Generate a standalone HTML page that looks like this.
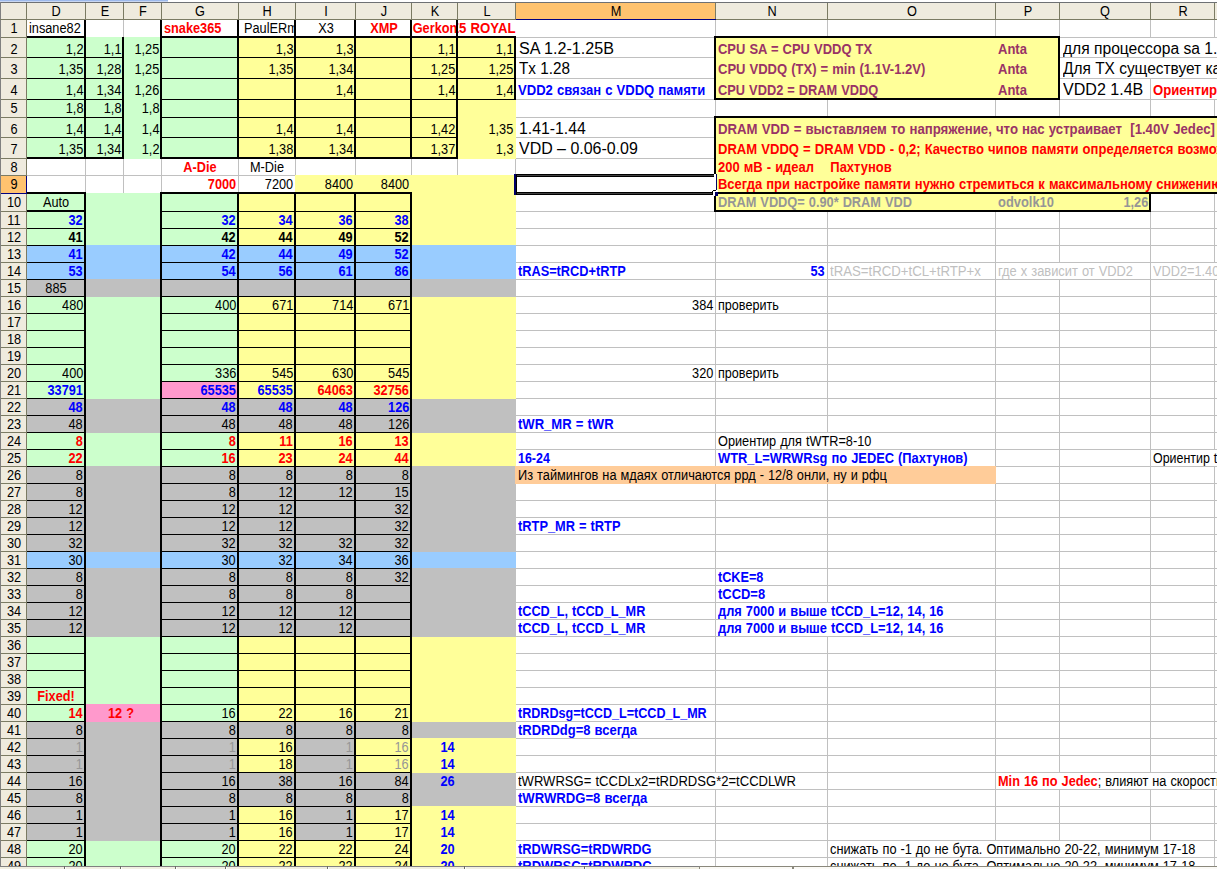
<!DOCTYPE html>
<html><head><meta charset="utf-8"><title>sheet</title>
<style>
html,body{margin:0;padding:0;background:#fff}
#w{position:relative;width:1217px;height:869px;overflow:hidden;background:#fff;font-family:"Liberation Sans",sans-serif;font-size:14px;color:#000}
#w i{position:absolute;display:block}
#w div{position:absolute;overflow:hidden}
#w p{position:absolute;display:block;white-space:pre;margin:0;line-height:16px;word-spacing:0.5px;transform:scaleX(0.91);transform-origin:0 0}
#w p.r{transform-origin:100% 0}
#w p.c{transform-origin:50% 0;width:300px;text-align:center}
#w p.b{font-weight:bold}
#w p.g{font-size:16px;line-height:19px;word-spacing:0;transform:scaleX(0.98)}
</style></head><body><div id="w">
<i style="left:85px;top:20px;width:1px;height:849px;background:#C0C0C0"></i>
<i style="left:123px;top:20px;width:1px;height:849px;background:#C0C0C0"></i>
<i style="left:161px;top:20px;width:1px;height:849px;background:#C0C0C0"></i>
<i style="left:238px;top:20px;width:1px;height:849px;background:#C0C0C0"></i>
<i style="left:295px;top:20px;width:1px;height:849px;background:#C0C0C0"></i>
<i style="left:355px;top:20px;width:1px;height:849px;background:#C0C0C0"></i>
<i style="left:411px;top:20px;width:1px;height:849px;background:#C0C0C0"></i>
<i style="left:457px;top:20px;width:1px;height:849px;background:#C0C0C0"></i>
<i style="left:515px;top:20px;width:1px;height:849px;background:#C0C0C0"></i>
<i style="left:715px;top:20px;width:1px;height:849px;background:#C0C0C0"></i>
<i style="left:827px;top:20px;width:1px;height:849px;background:#C0C0C0"></i>
<i style="left:995px;top:20px;width:1px;height:849px;background:#C0C0C0"></i>
<i style="left:1059px;top:20px;width:1px;height:849px;background:#C0C0C0"></i>
<i style="left:1150px;top:20px;width:1px;height:849px;background:#C0C0C0"></i>
<i style="left:1214px;top:20px;width:1px;height:849px;background:#C0C0C0"></i>
<i style="left:27px;top:37px;width:1190px;height:1px;background:#C0C0C0"></i>
<i style="left:27px;top:57px;width:1190px;height:1px;background:#C0C0C0"></i>
<i style="left:27px;top:78px;width:1190px;height:1px;background:#C0C0C0"></i>
<i style="left:27px;top:99px;width:1190px;height:1px;background:#C0C0C0"></i>
<i style="left:27px;top:117px;width:1190px;height:1px;background:#C0C0C0"></i>
<i style="left:27px;top:137px;width:1190px;height:1px;background:#C0C0C0"></i>
<i style="left:27px;top:158px;width:1190px;height:1px;background:#C0C0C0"></i>
<i style="left:27px;top:175px;width:1190px;height:1px;background:#C0C0C0"></i>
<i style="left:27px;top:193px;width:1190px;height:1px;background:#C0C0C0"></i>
<i style="left:27px;top:211px;width:1190px;height:1px;background:#C0C0C0"></i>
<i style="left:27px;top:228px;width:1190px;height:1px;background:#C0C0C0"></i>
<i style="left:27px;top:245px;width:1190px;height:1px;background:#C0C0C0"></i>
<i style="left:27px;top:262px;width:1190px;height:1px;background:#C0C0C0"></i>
<i style="left:27px;top:279px;width:1190px;height:1px;background:#C0C0C0"></i>
<i style="left:27px;top:296px;width:1190px;height:1px;background:#C0C0C0"></i>
<i style="left:27px;top:313px;width:1190px;height:1px;background:#C0C0C0"></i>
<i style="left:27px;top:330px;width:1190px;height:1px;background:#C0C0C0"></i>
<i style="left:27px;top:347px;width:1190px;height:1px;background:#C0C0C0"></i>
<i style="left:27px;top:364px;width:1190px;height:1px;background:#C0C0C0"></i>
<i style="left:27px;top:381px;width:1190px;height:1px;background:#C0C0C0"></i>
<i style="left:27px;top:398px;width:1190px;height:1px;background:#C0C0C0"></i>
<i style="left:27px;top:415px;width:1190px;height:1px;background:#C0C0C0"></i>
<i style="left:27px;top:432px;width:1190px;height:1px;background:#C0C0C0"></i>
<i style="left:27px;top:449px;width:1190px;height:1px;background:#C0C0C0"></i>
<i style="left:27px;top:466px;width:1190px;height:1px;background:#C0C0C0"></i>
<i style="left:27px;top:483px;width:1190px;height:1px;background:#C0C0C0"></i>
<i style="left:27px;top:500px;width:1190px;height:1px;background:#C0C0C0"></i>
<i style="left:27px;top:517px;width:1190px;height:1px;background:#C0C0C0"></i>
<i style="left:27px;top:534px;width:1190px;height:1px;background:#C0C0C0"></i>
<i style="left:27px;top:551px;width:1190px;height:1px;background:#C0C0C0"></i>
<i style="left:27px;top:568px;width:1190px;height:1px;background:#C0C0C0"></i>
<i style="left:27px;top:585px;width:1190px;height:1px;background:#C0C0C0"></i>
<i style="left:27px;top:602px;width:1190px;height:1px;background:#C0C0C0"></i>
<i style="left:27px;top:619px;width:1190px;height:1px;background:#C0C0C0"></i>
<i style="left:27px;top:636px;width:1190px;height:1px;background:#C0C0C0"></i>
<i style="left:27px;top:653px;width:1190px;height:1px;background:#C0C0C0"></i>
<i style="left:27px;top:670px;width:1190px;height:1px;background:#C0C0C0"></i>
<i style="left:27px;top:687px;width:1190px;height:1px;background:#C0C0C0"></i>
<i style="left:27px;top:704px;width:1190px;height:1px;background:#C0C0C0"></i>
<i style="left:27px;top:721px;width:1190px;height:1px;background:#C0C0C0"></i>
<i style="left:27px;top:738px;width:1190px;height:1px;background:#C0C0C0"></i>
<i style="left:27px;top:755px;width:1190px;height:1px;background:#C0C0C0"></i>
<i style="left:27px;top:772px;width:1190px;height:1px;background:#C0C0C0"></i>
<i style="left:27px;top:789px;width:1190px;height:1px;background:#C0C0C0"></i>
<i style="left:27px;top:806px;width:1190px;height:1px;background:#C0C0C0"></i>
<i style="left:27px;top:823px;width:1190px;height:1px;background:#C0C0C0"></i>
<i style="left:27px;top:840px;width:1190px;height:1px;background:#C0C0C0"></i>
<i style="left:27px;top:857px;width:1190px;height:1px;background:#C0C0C0"></i>
<i style="left:26px;top:37px;width:213px;height:21px;background:#CCFFCC"></i>
<i style="left:238px;top:37px;width:278px;height:21px;background:#FFFF99"></i>
<i style="left:26px;top:57px;width:213px;height:22px;background:#CCFFCC"></i>
<i style="left:238px;top:57px;width:278px;height:22px;background:#FFFF99"></i>
<i style="left:26px;top:78px;width:213px;height:22px;background:#CCFFCC"></i>
<i style="left:238px;top:78px;width:278px;height:22px;background:#FFFF99"></i>
<i style="left:26px;top:99px;width:213px;height:19px;background:#CCFFCC"></i>
<i style="left:238px;top:99px;width:278px;height:19px;background:#FFFF99"></i>
<i style="left:26px;top:117px;width:213px;height:21px;background:#CCFFCC"></i>
<i style="left:238px;top:117px;width:278px;height:21px;background:#FFFF99"></i>
<i style="left:26px;top:137px;width:213px;height:22px;background:#CCFFCC"></i>
<i style="left:238px;top:137px;width:278px;height:22px;background:#FFFF99"></i>
<i style="left:295px;top:175px;width:221px;height:19px;background:#FFFF99"></i>
<i style="left:26px;top:193px;width:213px;height:19px;background:#CCFFCC"></i>
<i style="left:238px;top:193px;width:278px;height:19px;background:#FFFF99"></i>
<i style="left:26px;top:211px;width:213px;height:18px;background:#CCFFCC"></i>
<i style="left:238px;top:211px;width:278px;height:18px;background:#FFFF99"></i>
<i style="left:26px;top:228px;width:213px;height:18px;background:#CCFFCC"></i>
<i style="left:238px;top:228px;width:278px;height:18px;background:#FFFF99"></i>
<i style="left:26px;top:296px;width:213px;height:18px;background:#CCFFCC"></i>
<i style="left:238px;top:296px;width:278px;height:18px;background:#FFFF99"></i>
<i style="left:26px;top:313px;width:213px;height:18px;background:#CCFFCC"></i>
<i style="left:238px;top:313px;width:278px;height:18px;background:#FFFF99"></i>
<i style="left:26px;top:330px;width:213px;height:18px;background:#CCFFCC"></i>
<i style="left:238px;top:330px;width:278px;height:18px;background:#FFFF99"></i>
<i style="left:26px;top:347px;width:213px;height:18px;background:#CCFFCC"></i>
<i style="left:238px;top:347px;width:278px;height:18px;background:#FFFF99"></i>
<i style="left:26px;top:364px;width:213px;height:18px;background:#CCFFCC"></i>
<i style="left:238px;top:364px;width:278px;height:18px;background:#FFFF99"></i>
<i style="left:26px;top:432px;width:213px;height:18px;background:#CCFFCC"></i>
<i style="left:238px;top:432px;width:278px;height:18px;background:#FFFF99"></i>
<i style="left:26px;top:449px;width:213px;height:18px;background:#CCFFCC"></i>
<i style="left:238px;top:449px;width:278px;height:18px;background:#FFFF99"></i>
<i style="left:26px;top:636px;width:213px;height:18px;background:#CCFFCC"></i>
<i style="left:238px;top:636px;width:278px;height:18px;background:#FFFF99"></i>
<i style="left:26px;top:653px;width:213px;height:18px;background:#CCFFCC"></i>
<i style="left:238px;top:653px;width:278px;height:18px;background:#FFFF99"></i>
<i style="left:26px;top:670px;width:213px;height:18px;background:#CCFFCC"></i>
<i style="left:238px;top:670px;width:278px;height:18px;background:#FFFF99"></i>
<i style="left:26px;top:687px;width:213px;height:18px;background:#CCFFCC"></i>
<i style="left:238px;top:687px;width:278px;height:18px;background:#FFFF99"></i>
<i style="left:26px;top:840px;width:213px;height:18px;background:#CCFFCC"></i>
<i style="left:238px;top:840px;width:278px;height:18px;background:#FFFF99"></i>
<i style="left:26px;top:857px;width:213px;height:18px;background:#CCFFCC"></i>
<i style="left:238px;top:857px;width:278px;height:18px;background:#FFFF99"></i>
<i style="left:26px;top:245px;width:490px;height:18px;background:#99CCFF"></i>
<i style="left:26px;top:262px;width:490px;height:18px;background:#99CCFF"></i>
<i style="left:26px;top:551px;width:490px;height:18px;background:#99CCFF"></i>
<i style="left:26px;top:279px;width:490px;height:18px;background:#C0C0C0"></i>
<i style="left:26px;top:398px;width:490px;height:18px;background:#C0C0C0"></i>
<i style="left:26px;top:415px;width:490px;height:18px;background:#C0C0C0"></i>
<i style="left:26px;top:466px;width:490px;height:18px;background:#C0C0C0"></i>
<i style="left:26px;top:483px;width:490px;height:18px;background:#C0C0C0"></i>
<i style="left:26px;top:500px;width:490px;height:18px;background:#C0C0C0"></i>
<i style="left:26px;top:517px;width:490px;height:18px;background:#C0C0C0"></i>
<i style="left:26px;top:534px;width:490px;height:18px;background:#C0C0C0"></i>
<i style="left:26px;top:568px;width:490px;height:18px;background:#C0C0C0"></i>
<i style="left:26px;top:585px;width:490px;height:18px;background:#C0C0C0"></i>
<i style="left:26px;top:602px;width:490px;height:18px;background:#C0C0C0"></i>
<i style="left:26px;top:619px;width:490px;height:18px;background:#C0C0C0"></i>
<i style="left:26px;top:721px;width:490px;height:18px;background:#C0C0C0"></i>
<i style="left:26px;top:772px;width:490px;height:18px;background:#C0C0C0"></i>
<i style="left:26px;top:789px;width:490px;height:18px;background:#C0C0C0"></i>
<i style="left:26px;top:381px;width:136px;height:18px;background:#CCFFCC"></i>
<i style="left:161px;top:381px;width:78px;height:18px;background:#FF99CC"></i>
<i style="left:238px;top:381px;width:278px;height:18px;background:#FFFF99"></i>
<i style="left:26px;top:704px;width:60px;height:18px;background:#CCFFCC"></i>
<i style="left:85px;top:704px;width:77px;height:18px;background:#FF99CC"></i>
<i style="left:161px;top:704px;width:78px;height:18px;background:#CCFFCC"></i>
<i style="left:238px;top:704px;width:278px;height:18px;background:#FFFF99"></i>
<i style="left:26px;top:738px;width:213px;height:18px;background:#C0C0C0"></i>
<i style="left:238px;top:738px;width:58px;height:18px;background:#FFFF99"></i>
<i style="left:295px;top:738px;width:61px;height:18px;background:#C0C0C0"></i>
<i style="left:355px;top:738px;width:161px;height:18px;background:#FFFF99"></i>
<i style="left:26px;top:755px;width:213px;height:18px;background:#C0C0C0"></i>
<i style="left:238px;top:755px;width:58px;height:18px;background:#FFFF99"></i>
<i style="left:295px;top:755px;width:61px;height:18px;background:#C0C0C0"></i>
<i style="left:355px;top:755px;width:161px;height:18px;background:#FFFF99"></i>
<i style="left:26px;top:806px;width:213px;height:18px;background:#C0C0C0"></i>
<i style="left:238px;top:806px;width:58px;height:18px;background:#FFFF99"></i>
<i style="left:295px;top:806px;width:61px;height:18px;background:#C0C0C0"></i>
<i style="left:355px;top:806px;width:161px;height:18px;background:#FFFF99"></i>
<i style="left:26px;top:823px;width:213px;height:18px;background:#C0C0C0"></i>
<i style="left:238px;top:823px;width:58px;height:18px;background:#FFFF99"></i>
<i style="left:295px;top:823px;width:61px;height:18px;background:#C0C0C0"></i>
<i style="left:355px;top:823px;width:161px;height:18px;background:#FFFF99"></i>
<i style="left:715px;top:37px;width:345px;height:63px;background:#FFFF99"></i>
<i style="left:715px;top:117px;width:586px;height:77px;background:#FFFF99"></i>
<i style="left:715px;top:193px;width:436px;height:19px;background:#FFFF99"></i>
<i style="left:515px;top:466px;width:481px;height:18px;background:#FFCC99"></i>
<i style="left:515px;top:20px;width:1px;height:17px;background:#fff"></i>
<i style="left:1150px;top:38px;width:1px;height:19px;background:#fff"></i>
<i style="left:1150px;top:58px;width:1px;height:20px;background:#fff"></i>
<i style="left:1214px;top:38px;width:1px;height:19px;background:#fff"></i>
<i style="left:1214px;top:58px;width:1px;height:20px;background:#fff"></i>
<i style="left:1214px;top:79px;width:1px;height:20px;background:#fff"></i>
<i style="left:715px;top:773px;width:1px;height:16px;background:#fff"></i>
<i style="left:1059px;top:773px;width:1px;height:16px;background:#fff"></i>
<i style="left:1150px;top:773px;width:1px;height:16px;background:#fff"></i>
<i style="left:1214px;top:773px;width:1px;height:16px;background:#fff"></i>
<i style="left:995px;top:841px;width:1px;height:16px;background:#fff"></i>
<i style="left:1059px;top:841px;width:1px;height:16px;background:#fff"></i>
<i style="left:1150px;top:841px;width:1px;height:16px;background:#fff"></i>
<i style="left:995px;top:858px;width:1px;height:16px;background:#fff"></i>
<i style="left:1059px;top:858px;width:1px;height:16px;background:#fff"></i>
<i style="left:1150px;top:858px;width:1px;height:16px;background:#fff"></i>
<i style="left:827px;top:450px;width:1px;height:16px;background:#fff"></i>
<i style="left:827px;top:433px;width:1px;height:16px;background:#fff"></i>
<i style="left:827px;top:603px;width:1px;height:16px;background:#fff"></i>
<i style="left:827px;top:620px;width:1px;height:16px;background:#fff"></i>
<i style="left:1214px;top:450px;width:1px;height:16px;background:#fff"></i>
<i style="left:1214px;top:263px;width:1px;height:16px;background:#fff"></i>
<i style="left:1059px;top:263px;width:1px;height:16px;background:#fff"></i>
<i style="left:27px;top:36px;width:59px;height:2px;background:#000"></i>
<i style="left:84px;top:20px;width:2px;height:139px;background:#000"></i>
<i style="left:122px;top:37px;width:2px;height:122px;background:#000"></i>
<i style="left:27px;top:157px;width:97px;height:2px;background:#000"></i>
<i style="left:27px;top:57px;width:97px;height:1px;background:#000"></i>
<i style="left:27px;top:78px;width:97px;height:1px;background:#000"></i>
<i style="left:27px;top:99px;width:97px;height:1px;background:#000"></i>
<i style="left:27px;top:117px;width:97px;height:1px;background:#000"></i>
<i style="left:27px;top:137px;width:97px;height:1px;background:#000"></i>
<i style="left:160px;top:36px;width:356px;height:2px;background:#000"></i>
<i style="left:160px;top:20px;width:2px;height:139px;background:#000"></i>
<i style="left:237px;top:20px;width:2px;height:139px;background:#000"></i>
<i style="left:294px;top:20px;width:2px;height:139px;background:#000"></i>
<i style="left:354px;top:20px;width:2px;height:139px;background:#000"></i>
<i style="left:410px;top:20px;width:2px;height:139px;background:#000"></i>
<i style="left:456px;top:20px;width:2px;height:139px;background:#000"></i>
<i style="left:514px;top:36px;width:2px;height:64px;background:#000"></i>
<i style="left:160px;top:157px;width:298px;height:2px;background:#000"></i>
<i style="left:162px;top:57px;width:296px;height:1px;background:#000"></i>
<i style="left:162px;top:78px;width:296px;height:1px;background:#000"></i>
<i style="left:162px;top:99px;width:296px;height:1px;background:#000"></i>
<i style="left:162px;top:117px;width:296px;height:1px;background:#000"></i>
<i style="left:162px;top:137px;width:296px;height:1px;background:#000"></i>
<i style="left:458px;top:57px;width:58px;height:1px;background:#000"></i>
<i style="left:458px;top:78px;width:58px;height:1px;background:#000"></i>
<i style="left:458px;top:99px;width:58px;height:1px;background:#000"></i>
<i style="left:27px;top:192px;width:59px;height:2px;background:#000"></i>
<i style="left:84px;top:192px;width:2px;height:678px;background:#000"></i>
<i style="left:27px;top:210px;width:59px;height:2px;background:#000"></i>
<i style="left:27px;top:228px;width:59px;height:1px;background:#000"></i>
<i style="left:27px;top:245px;width:59px;height:1px;background:#000"></i>
<i style="left:27px;top:262px;width:59px;height:1px;background:#000"></i>
<i style="left:27px;top:279px;width:59px;height:1px;background:#000"></i>
<i style="left:27px;top:296px;width:59px;height:1px;background:#000"></i>
<i style="left:27px;top:313px;width:59px;height:1px;background:#000"></i>
<i style="left:27px;top:330px;width:59px;height:1px;background:#000"></i>
<i style="left:27px;top:347px;width:59px;height:1px;background:#000"></i>
<i style="left:27px;top:364px;width:59px;height:1px;background:#000"></i>
<i style="left:27px;top:381px;width:59px;height:1px;background:#000"></i>
<i style="left:27px;top:398px;width:59px;height:1px;background:#000"></i>
<i style="left:27px;top:415px;width:59px;height:1px;background:#000"></i>
<i style="left:27px;top:432px;width:59px;height:1px;background:#000"></i>
<i style="left:27px;top:449px;width:59px;height:1px;background:#000"></i>
<i style="left:27px;top:466px;width:59px;height:1px;background:#000"></i>
<i style="left:27px;top:483px;width:59px;height:1px;background:#000"></i>
<i style="left:27px;top:500px;width:59px;height:1px;background:#000"></i>
<i style="left:27px;top:517px;width:59px;height:1px;background:#000"></i>
<i style="left:27px;top:534px;width:59px;height:1px;background:#000"></i>
<i style="left:27px;top:551px;width:59px;height:1px;background:#000"></i>
<i style="left:27px;top:568px;width:59px;height:1px;background:#000"></i>
<i style="left:27px;top:585px;width:59px;height:1px;background:#000"></i>
<i style="left:27px;top:602px;width:59px;height:1px;background:#000"></i>
<i style="left:27px;top:619px;width:59px;height:1px;background:#000"></i>
<i style="left:27px;top:636px;width:59px;height:1px;background:#000"></i>
<i style="left:27px;top:653px;width:59px;height:1px;background:#000"></i>
<i style="left:27px;top:670px;width:59px;height:1px;background:#000"></i>
<i style="left:27px;top:687px;width:59px;height:1px;background:#000"></i>
<i style="left:27px;top:704px;width:59px;height:1px;background:#000"></i>
<i style="left:27px;top:721px;width:59px;height:1px;background:#000"></i>
<i style="left:27px;top:738px;width:59px;height:1px;background:#000"></i>
<i style="left:27px;top:755px;width:59px;height:1px;background:#000"></i>
<i style="left:27px;top:772px;width:59px;height:1px;background:#000"></i>
<i style="left:27px;top:789px;width:59px;height:1px;background:#000"></i>
<i style="left:27px;top:806px;width:59px;height:1px;background:#000"></i>
<i style="left:27px;top:823px;width:59px;height:1px;background:#000"></i>
<i style="left:27px;top:840px;width:59px;height:1px;background:#000"></i>
<i style="left:27px;top:857px;width:59px;height:1px;background:#000"></i>
<i style="left:27px;top:874px;width:59px;height:1px;background:#000"></i>
<i style="left:160px;top:192px;width:252px;height:2px;background:#000"></i>
<i style="left:160px;top:192px;width:2px;height:678px;background:#000"></i>
<i style="left:237px;top:192px;width:2px;height:678px;background:#000"></i>
<i style="left:294px;top:192px;width:2px;height:678px;background:#000"></i>
<i style="left:354px;top:192px;width:2px;height:678px;background:#000"></i>
<i style="left:410px;top:192px;width:2px;height:678px;background:#000"></i>
<i style="left:162px;top:211px;width:250px;height:1px;background:#000"></i>
<i style="left:162px;top:228px;width:250px;height:1px;background:#000"></i>
<i style="left:162px;top:245px;width:250px;height:1px;background:#000"></i>
<i style="left:162px;top:262px;width:250px;height:1px;background:#000"></i>
<i style="left:162px;top:279px;width:250px;height:1px;background:#000"></i>
<i style="left:162px;top:296px;width:250px;height:1px;background:#000"></i>
<i style="left:162px;top:313px;width:250px;height:1px;background:#000"></i>
<i style="left:162px;top:330px;width:250px;height:1px;background:#000"></i>
<i style="left:162px;top:347px;width:250px;height:1px;background:#000"></i>
<i style="left:162px;top:364px;width:250px;height:1px;background:#000"></i>
<i style="left:162px;top:381px;width:250px;height:1px;background:#000"></i>
<i style="left:162px;top:398px;width:250px;height:1px;background:#000"></i>
<i style="left:162px;top:415px;width:250px;height:1px;background:#000"></i>
<i style="left:162px;top:432px;width:250px;height:1px;background:#000"></i>
<i style="left:162px;top:449px;width:250px;height:1px;background:#000"></i>
<i style="left:162px;top:466px;width:250px;height:1px;background:#000"></i>
<i style="left:162px;top:483px;width:250px;height:1px;background:#000"></i>
<i style="left:162px;top:500px;width:250px;height:1px;background:#000"></i>
<i style="left:162px;top:517px;width:250px;height:1px;background:#000"></i>
<i style="left:162px;top:534px;width:250px;height:1px;background:#000"></i>
<i style="left:162px;top:551px;width:250px;height:1px;background:#000"></i>
<i style="left:162px;top:568px;width:250px;height:1px;background:#000"></i>
<i style="left:162px;top:585px;width:250px;height:1px;background:#000"></i>
<i style="left:162px;top:602px;width:250px;height:1px;background:#000"></i>
<i style="left:162px;top:619px;width:250px;height:1px;background:#000"></i>
<i style="left:162px;top:636px;width:250px;height:1px;background:#000"></i>
<i style="left:162px;top:653px;width:250px;height:1px;background:#000"></i>
<i style="left:162px;top:670px;width:250px;height:1px;background:#000"></i>
<i style="left:162px;top:687px;width:250px;height:1px;background:#000"></i>
<i style="left:162px;top:704px;width:250px;height:1px;background:#000"></i>
<i style="left:162px;top:721px;width:250px;height:1px;background:#000"></i>
<i style="left:162px;top:738px;width:250px;height:1px;background:#000"></i>
<i style="left:162px;top:755px;width:250px;height:1px;background:#000"></i>
<i style="left:162px;top:772px;width:250px;height:1px;background:#000"></i>
<i style="left:162px;top:789px;width:250px;height:1px;background:#000"></i>
<i style="left:162px;top:806px;width:250px;height:1px;background:#000"></i>
<i style="left:162px;top:823px;width:250px;height:1px;background:#000"></i>
<i style="left:162px;top:840px;width:250px;height:1px;background:#000"></i>
<i style="left:162px;top:857px;width:250px;height:1px;background:#000"></i>
<i style="left:162px;top:874px;width:250px;height:1px;background:#000"></i>
<i style="left:714px;top:36px;width:346px;height:2px;background:#000"></i>
<i style="left:714px;top:98px;width:346px;height:2px;background:#000"></i>
<i style="left:714px;top:36px;width:2px;height:64px;background:#000"></i>
<i style="left:1058px;top:36px;width:2px;height:64px;background:#000"></i>
<i style="left:714px;top:116px;width:503px;height:2px;background:#000"></i>
<i style="left:714px;top:116px;width:2px;height:96px;background:#000"></i>
<i style="left:714px;top:192px;width:503px;height:2px;background:#000"></i>
<i style="left:714px;top:210px;width:437px;height:2px;background:#000"></i>
<i style="left:1149px;top:192px;width:2px;height:20px;background:#000"></i>
<p class="l" style="top:20px;left:29px;">insane82</p>
<p class="l b" style="top:20px;color:#FF0000;left:164px;">snake365</p>
<div style="left:239px;top:20px;width:55px;height:16px">
<p class="l" style="top:0;left:5px;">PaulERm</p></div>
<p class="c" style="top:20px;left:175.5px;">X3</p>
<p class="c b" style="top:20px;color:#FF0000;left:233.5px;">XMP</p>
<div style="left:412px;top:20px;width:44px;height:16px">
<p class="c b" style="top:0;color:#FF0000;left:-127.5px;">Gerkon</p></div>
<div style="left:458px;top:20px;width:242px;height:16px">
<p class="l b" style="top:0;color:#FF0000;transform:scaleX(0.9423);left:-6.699999999999989px;">Z5 ROYAL</p></div>
<p class="r" style="top:41px;right:1134px;">1,2</p>
<p class="r" style="top:41px;right:1096px;">1,1</p>
<p class="r" style="top:41px;right:1058px;">1,25</p>
<p class="r" style="top:41px;right:924px;">1,3</p>
<p class="r" style="top:41px;right:864px;">1,3</p>
<p class="r" style="top:41px;right:762px;">1,1</p>
<p class="r" style="top:41px;right:704px;">1,1</p>
<p class="r" style="top:61px;right:1134px;">1,35</p>
<p class="r" style="top:61px;right:1096px;">1,28</p>
<p class="r" style="top:61px;right:1058px;">1,25</p>
<p class="r" style="top:61px;right:924px;">1,35</p>
<p class="r" style="top:61px;right:864px;">1,34</p>
<p class="r" style="top:61px;right:762px;">1,25</p>
<p class="r" style="top:61px;right:704px;">1,25</p>
<p class="r" style="top:82px;right:1134px;">1,4</p>
<p class="r" style="top:82px;right:1096px;">1,34</p>
<p class="r" style="top:82px;right:1058px;">1,26</p>
<p class="r" style="top:82px;right:864px;">1,4</p>
<p class="r" style="top:82px;right:762px;">1,4</p>
<p class="r" style="top:82px;right:704px;">1,4</p>
<p class="r" style="top:100px;right:1134px;">1,8</p>
<p class="r" style="top:100px;right:1096px;">1,8</p>
<p class="r" style="top:100px;right:1058px;">1,8</p>
<p class="r" style="top:121px;right:1134px;">1,4</p>
<p class="r" style="top:121px;right:1096px;">1,4</p>
<p class="r" style="top:121px;right:1058px;">1,4</p>
<p class="r" style="top:121px;right:924px;">1,4</p>
<p class="r" style="top:121px;right:864px;">1,4</p>
<p class="r" style="top:121px;right:762px;">1,42</p>
<p class="r" style="top:121px;right:704px;">1,35</p>
<p class="r" style="top:141px;right:1134px;">1,35</p>
<p class="r" style="top:141px;right:1096px;">1,34</p>
<p class="r" style="top:141px;right:1058px;">1,2</p>
<p class="r" style="top:141px;right:924px;">1,38</p>
<p class="r" style="top:141px;right:864px;">1,34</p>
<p class="r" style="top:141px;right:762px;">1,37</p>
<p class="r" style="top:141px;right:704px;">1,3</p>
<p class="c b" style="top:159px;color:#FF0000;left:50.0px;">A-Die</p>
<p class="c" style="top:159px;left:117.0px;">M-Die</p>
<p class="r b" style="top:176px;color:#FF0000;right:981px;">7000</p>
<p class="r" style="top:176px;right:924px;">7200</p>
<p class="r" style="top:176px;right:864px;">8400</p>
<p class="r" style="top:176px;right:808px;">8400</p>
<p class="c" style="top:194px;left:-94.0px;">Auto</p>
<p class="c" style="top:280px;left:-94.0px;">885</p>
<p class="c b" style="top:688px;color:#FF0000;left:-94.0px;">Fixed!</p>
<p class="c b" style="top:705px;color:#FF0000;left:-29.5px;">12 ?</p>
<p class="r b" style="top:212px;color:#0000FF;right:1134px;">32</p>
<p class="r b" style="top:212px;color:#0000FF;right:981px;">32</p>
<p class="r b" style="top:212px;color:#0000FF;right:924px;">34</p>
<p class="r b" style="top:212px;color:#0000FF;right:864px;">36</p>
<p class="r b" style="top:212px;color:#0000FF;right:808px;">38</p>
<p class="r b" style="top:229px;right:1134px;">41</p>
<p class="r b" style="top:229px;right:981px;">42</p>
<p class="r b" style="top:229px;right:924px;">44</p>
<p class="r b" style="top:229px;right:864px;">49</p>
<p class="r b" style="top:229px;right:808px;">52</p>
<p class="r b" style="top:246px;color:#0000FF;right:1134px;">41</p>
<p class="r b" style="top:246px;color:#0000FF;right:981px;">42</p>
<p class="r b" style="top:246px;color:#0000FF;right:924px;">44</p>
<p class="r b" style="top:246px;color:#0000FF;right:864px;">49</p>
<p class="r b" style="top:246px;color:#0000FF;right:808px;">52</p>
<p class="r b" style="top:263px;color:#0000FF;right:1134px;">53</p>
<p class="r b" style="top:263px;color:#0000FF;right:981px;">54</p>
<p class="r b" style="top:263px;color:#0000FF;right:924px;">56</p>
<p class="r b" style="top:263px;color:#0000FF;right:864px;">61</p>
<p class="r b" style="top:263px;color:#0000FF;right:808px;">86</p>
<p class="r" style="top:297px;right:1134px;">480</p>
<p class="r" style="top:297px;right:981px;">400</p>
<p class="r" style="top:297px;right:924px;">671</p>
<p class="r" style="top:297px;right:864px;">714</p>
<p class="r" style="top:297px;right:808px;">671</p>
<p class="r" style="top:365px;right:1134px;">400</p>
<p class="r" style="top:365px;right:981px;">336</p>
<p class="r" style="top:365px;right:924px;">545</p>
<p class="r" style="top:365px;right:864px;">630</p>
<p class="r" style="top:365px;right:808px;">545</p>
<p class="r b" style="top:399px;color:#0000FF;right:1134px;">48</p>
<p class="r b" style="top:399px;color:#0000FF;right:981px;">48</p>
<p class="r b" style="top:399px;color:#0000FF;right:924px;">48</p>
<p class="r b" style="top:399px;color:#0000FF;right:864px;">48</p>
<p class="r b" style="top:399px;color:#0000FF;right:808px;">126</p>
<p class="r" style="top:416px;right:1134px;">48</p>
<p class="r" style="top:416px;right:981px;">48</p>
<p class="r" style="top:416px;right:924px;">48</p>
<p class="r" style="top:416px;right:864px;">48</p>
<p class="r" style="top:416px;right:808px;">126</p>
<p class="r b" style="top:433px;color:#FF0000;right:1134px;">8</p>
<p class="r b" style="top:433px;color:#FF0000;right:981px;">8</p>
<p class="r b" style="top:433px;color:#FF0000;right:924px;">11</p>
<p class="r b" style="top:433px;color:#FF0000;right:864px;">16</p>
<p class="r b" style="top:433px;color:#FF0000;right:808px;">13</p>
<p class="r b" style="top:450px;color:#FF0000;right:1134px;">22</p>
<p class="r b" style="top:450px;color:#FF0000;right:981px;">16</p>
<p class="r b" style="top:450px;color:#FF0000;right:924px;">23</p>
<p class="r b" style="top:450px;color:#FF0000;right:864px;">24</p>
<p class="r b" style="top:450px;color:#FF0000;right:808px;">44</p>
<p class="r" style="top:467px;right:1134px;">8</p>
<p class="r" style="top:467px;right:981px;">8</p>
<p class="r" style="top:467px;right:924px;">8</p>
<p class="r" style="top:467px;right:864px;">8</p>
<p class="r" style="top:467px;right:808px;">8</p>
<p class="r" style="top:484px;right:1134px;">8</p>
<p class="r" style="top:484px;right:981px;">8</p>
<p class="r" style="top:484px;right:924px;">12</p>
<p class="r" style="top:484px;right:864px;">12</p>
<p class="r" style="top:484px;right:808px;">15</p>
<p class="r" style="top:501px;right:1134px;">12</p>
<p class="r" style="top:501px;right:981px;">12</p>
<p class="r" style="top:501px;right:924px;">12</p>
<p class="r" style="top:501px;right:808px;">32</p>
<p class="r" style="top:518px;right:1134px;">12</p>
<p class="r" style="top:518px;right:981px;">12</p>
<p class="r" style="top:518px;right:924px;">12</p>
<p class="r" style="top:518px;right:808px;">32</p>
<p class="r" style="top:535px;right:1134px;">32</p>
<p class="r" style="top:535px;right:981px;">32</p>
<p class="r" style="top:535px;right:924px;">32</p>
<p class="r" style="top:535px;right:864px;">32</p>
<p class="r" style="top:535px;right:808px;">32</p>
<p class="r" style="top:552px;right:1134px;">30</p>
<p class="r" style="top:552px;right:981px;">30</p>
<p class="r" style="top:552px;right:924px;">32</p>
<p class="r" style="top:552px;right:864px;">34</p>
<p class="r" style="top:552px;right:808px;">36</p>
<p class="r" style="top:569px;right:1134px;">8</p>
<p class="r" style="top:569px;right:981px;">8</p>
<p class="r" style="top:569px;right:924px;">8</p>
<p class="r" style="top:569px;right:864px;">8</p>
<p class="r" style="top:569px;right:808px;">32</p>
<p class="r" style="top:586px;right:1134px;">8</p>
<p class="r" style="top:586px;right:981px;">8</p>
<p class="r" style="top:586px;right:924px;">8</p>
<p class="r" style="top:586px;right:864px;">8</p>
<p class="r" style="top:603px;right:1134px;">12</p>
<p class="r" style="top:603px;right:981px;">12</p>
<p class="r" style="top:603px;right:924px;">12</p>
<p class="r" style="top:603px;right:864px;">12</p>
<p class="r" style="top:620px;right:1134px;">12</p>
<p class="r" style="top:620px;right:981px;">12</p>
<p class="r" style="top:620px;right:924px;">12</p>
<p class="r" style="top:620px;right:864px;">12</p>
<p class="r" style="top:722px;right:1134px;">8</p>
<p class="r" style="top:722px;right:981px;">8</p>
<p class="r" style="top:722px;right:924px;">8</p>
<p class="r" style="top:722px;right:864px;">8</p>
<p class="r" style="top:722px;right:808px;">8</p>
<p class="r" style="top:773px;right:1134px;">16</p>
<p class="r" style="top:773px;right:981px;">16</p>
<p class="r" style="top:773px;right:924px;">38</p>
<p class="r" style="top:773px;right:864px;">16</p>
<p class="r" style="top:773px;right:808px;">84</p>
<p class="r" style="top:790px;right:1134px;">8</p>
<p class="r" style="top:790px;right:981px;">8</p>
<p class="r" style="top:790px;right:924px;">8</p>
<p class="r" style="top:790px;right:864px;">8</p>
<p class="r" style="top:790px;right:808px;">8</p>
<p class="r" style="top:807px;right:1134px;">1</p>
<p class="r" style="top:807px;right:981px;">1</p>
<p class="r" style="top:807px;right:924px;">16</p>
<p class="r" style="top:807px;right:864px;">1</p>
<p class="r" style="top:807px;right:808px;">17</p>
<p class="r" style="top:824px;right:1134px;">1</p>
<p class="r" style="top:824px;right:981px;">1</p>
<p class="r" style="top:824px;right:924px;">16</p>
<p class="r" style="top:824px;right:864px;">1</p>
<p class="r" style="top:824px;right:808px;">17</p>
<p class="r" style="top:841px;right:1134px;">20</p>
<p class="r" style="top:841px;right:981px;">20</p>
<p class="r" style="top:841px;right:924px;">22</p>
<p class="r" style="top:841px;right:864px;">22</p>
<p class="r" style="top:841px;right:808px;">24</p>
<p class="r" style="top:858px;right:1134px;">20</p>
<p class="r" style="top:858px;right:981px;">20</p>
<p class="r" style="top:858px;right:924px;">22</p>
<p class="r" style="top:858px;right:864px;">22</p>
<p class="r" style="top:858px;right:808px;">24</p>
<p class="r b" style="top:382px;color:#0000FF;right:1134px;">33791</p>
<p class="r b" style="top:382px;color:#0000FF;right:981px;">65535</p>
<p class="r b" style="top:382px;color:#0000FF;right:924px;">65535</p>
<p class="r b" style="top:382px;color:#FF0000;right:864px;">64063</p>
<p class="r b" style="top:382px;color:#FF0000;right:808px;">32756</p>
<p class="r b" style="top:705px;color:#FF0000;right:1134px;">14</p>
<p class="r" style="top:705px;right:981px;">16</p>
<p class="r" style="top:705px;right:924px;">22</p>
<p class="r" style="top:705px;right:864px;">16</p>
<p class="r" style="top:705px;right:808px;">21</p>
<p class="r" style="top:739px;color:#969696;right:1134px;">1</p>
<p class="r" style="top:739px;color:#969696;right:981px;">1</p>
<p class="r" style="top:739px;right:924px;">16</p>
<p class="r" style="top:739px;color:#969696;right:864px;">1</p>
<p class="r" style="top:739px;color:#969696;right:808px;">16</p>
<p class="r" style="top:756px;color:#969696;right:1134px;">1</p>
<p class="r" style="top:756px;color:#969696;right:981px;">1</p>
<p class="r" style="top:756px;right:924px;">18</p>
<p class="r" style="top:756px;color:#969696;right:864px;">1</p>
<p class="r" style="top:756px;color:#969696;right:808px;">16</p>
<p class="r b" style="top:739px;color:#0000FF;right:762px;">14</p>
<p class="r b" style="top:756px;color:#0000FF;right:762px;">14</p>
<p class="r b" style="top:773px;color:#0000FF;right:762px;">26</p>
<p class="r b" style="top:807px;color:#0000FF;right:762px;">14</p>
<p class="r b" style="top:824px;color:#0000FF;right:762px;">14</p>
<p class="r b" style="top:841px;color:#0000FF;right:762px;">20</p>
<p class="r b" style="top:858px;color:#0000FF;right:762px;">20</p>
<p class="l g" style="top:39px;transform:scaleX(1.0069);left:519.3px;">SA 1.2-1.25B</p>
<p class="l g" style="top:59px;transform:scaleX(0.9539);left:519.3px;">Tx 1.28</p>
<p class="l b" style="top:82px;color:#0000FF;transform:scaleX(0.9324);left:518px;">VDD2 связан с VDDQ памяти</p>
<p class="l g" style="top:119px;transform:scaleX(0.9865);left:519.3px;">1.41-1.44</p>
<p class="l g" style="top:139px;transform:scaleX(0.9967);left:519.3px;">VDD – 0.06-0.09</p>
<p class="l b" style="top:263px;color:#0000FF;transform:scaleX(0.9109);left:518px;">tRAS=tRCD+tRTP</p>
<p class="r" style="top:297px;right:504px;">384</p>
<p class="l" style="top:297px;transform:scaleX(0.9001);left:718px;">проверить</p>
<p class="r" style="top:365px;right:504px;">320</p>
<p class="l" style="top:365px;transform:scaleX(0.9001);left:718px;">проверить</p>
<p class="l b" style="top:416px;color:#0000FF;transform:scaleX(0.9327);left:518px;">tWR_MR = tWR</p>
<p class="l" style="top:433px;transform:scaleX(0.9087);left:718px;">Ориентир для tWTR=8-10</p>
<p class="l b" style="top:450px;color:#0000FF;transform:scaleX(0.8880);left:518px;">16-24</p>
<p class="l b" style="top:450px;color:#0000FF;transform:scaleX(0.9188);left:718px;">WTR_L=WRWRsg по JEDEC (Пахтунов)</p>
<p class="l" style="top:450px;transform:scaleX(0.8871);left:1153px;">Ориентир tWTR</p>
<p class="l" style="top:467px;transform:scaleX(0.9133);left:518px;">Из таймингов на мдаях отличаются ррд - 12/8 онли, ну и рфц</p>
<p class="l b" style="top:518px;color:#0000FF;transform:scaleX(0.9165);left:518px;">tRTP_MR = tRTP</p>
<p class="l b" style="top:569px;color:#0000FF;transform:scaleX(0.9046);left:718px;">tCKE=8</p>
<p class="l b" style="top:586px;color:#0000FF;transform:scaleX(0.9241);left:718px;">tCCD=8</p>
<p class="l b" style="top:603px;color:#0000FF;transform:scaleX(0.9060);left:518px;">tCCD_L, tCCD_L_MR</p>
<p class="l b" style="top:603px;color:#0000FF;transform:scaleX(0.9164);left:718px;">для 7000 и выше tCCD_L=12, 14, 16</p>
<p class="l b" style="top:620px;color:#0000FF;transform:scaleX(0.9060);left:518px;">tCCD_L, tCCD_L_MR</p>
<p class="l b" style="top:620px;color:#0000FF;transform:scaleX(0.9164);left:718px;">для 7000 и выше tCCD_L=12, 14, 16</p>
<p class="l b" style="top:705px;color:#0000FF;transform:scaleX(0.8985);left:518px;">tRDRDsg=tCCD_L=tCCD_L_MR</p>
<p class="l b" style="top:722px;color:#0000FF;transform:scaleX(0.9271);left:518px;">tRDRDdg=8 всегда</p>
<p class="l" style="top:773px;transform:scaleX(0.9319);left:518px;">tWRWRSG= tCCDLx2=tRDRDSG*2=tCCDLWR</p>
<p class="l" style="left:998px;top:773px"><span style="color:#FF0000;font-weight:bold">Min 16 по Jedec</span>; влияют на скорость</p>
<p class="l b" style="top:790px;color:#0000FF;transform:scaleX(0.9362);left:518px;">tWRWRDG=8 всегда</p>
<p class="l b" style="top:841px;color:#0000FF;transform:scaleX(0.9155);left:518px;">tRDWRSG=tRDWRDG</p>
<p class="l" style="top:841px;transform:scaleX(0.9126);left:830px;">снижать по -1 до не бута. Оптимально 20-22, минимум 17-18</p>
<p class="l b" style="top:858px;color:#0000FF;transform:scaleX(0.9254);left:518px;">tRDWRSC=tRDWRDC</p>
<p class="l" style="top:858px;transform:scaleX(0.9126);left:830px;">снижать по -1 до не бута. Оптимально 20-22, минимум 17-18</p>
<p class="l b" style="top:41px;color:#993366;transform:scaleX(0.9254);left:718px;">CPU SA = CPU VDDQ TX</p>
<p class="l b" style="top:41px;color:#993366;transform:scaleX(0.9285);left:998px;">Anta</p>
<p class="l b" style="top:61px;color:#993366;transform:scaleX(0.9293);left:718px;">CPU VDDQ (TX) = min (1.1V-1.2V)</p>
<p class="l b" style="top:61px;color:#993366;transform:scaleX(0.9285);left:998px;">Anta</p>
<p class="l b" style="top:82px;color:#993366;transform:scaleX(0.9155);left:718px;">CPU VDD2 = DRAM VDDQ</p>
<p class="l b" style="top:82px;color:#993366;transform:scaleX(0.9285);left:998px;">Anta</p>
<p class="l g" style="top:39px;transform:scaleX(0.9761);left:1063.3px;">для процессора sa 1.25</p>
<p class="l g" style="top:59px;transform:scaleX(0.9654);left:1063.3px;">Для TX существует какой-то</p>
<p class="l g" style="top:80px;transform:scaleX(1.0032);left:1063.3px;">VDD2 1.4В</p>
<p class="l b" style="top:82px;color:#FF0000;transform:scaleX(0.9369);left:1153px;">Ориентир</p>
<p class="l b" style="top:121px;color:#993366;transform:scaleX(0.9415);left:718px;">DRAM VDD = выставляем то напряжение, что нас устраивает&nbsp; [1.40V Jedec]</p>
<p class="l b" style="top:141px;color:#FF0000;transform:scaleX(0.9325);left:718px;">DRAM VDDQ = DRAM VDD - 0,2; Качество чипов памяти определяется возможностью</p>
<p class="l b" style="top:159px;color:#FF0000;transform:scaleX(0.9268);left:718px;">200 мВ - идеал&nbsp;&nbsp;&nbsp; Пахтунов</p>
<p class="l b" style="top:176px;color:#FF0000;transform:scaleX(0.9265);left:718px;">Всегда при настройке памяти нужно стремиться к максимальному снижению</p>
<p class="l b" style="top:194px;color:#969696;transform:scaleX(0.9132);left:718px;">DRAM VDDQ= 0.90* DRAM VDD</p>
<p class="l b" style="top:194px;color:#969696;transform:scaleX(0.9209);left:998px;">odvolk10</p>
<p class="r b" style="top:194px;color:#969696;right:69px;">1,26</p>
<p class="r b" style="top:263px;color:#0000FF;right:392px;">53</p>
<p class="l" style="top:263px;color:#C0C0C0;transform:scaleX(0.9429);left:830px;">tRAS=tRCD+tCL+tRTP+x</p>
<p class="l" style="top:263px;color:#C0C0C0;transform:scaleX(0.9189);left:998px;">где x зависит от VDD2</p>
<p class="l" style="top:263px;color:#C0C0C0;left:1153px;">VDD2=1.40</p>
<i style="left:0px;top:0px;width:1217px;height:3px;background:#fff"></i>
<i style="left:0px;top:0px;width:168px;height:1px;background:#9DB9EB"></i>
<i style="left:0px;top:1px;width:168px;height:1px;background:#C9D7F1"></i>
<i style="left:0px;top:2px;width:1217px;height:1px;background:#6E7174"></i>
<i style="left:0px;top:3px;width:1217px;height:17px;background:#EFEBDE"></i>
<i style="left:0px;top:3px;width:27px;height:869px;background:#EFEBDE"></i>
<i style="left:0px;top:2px;width:1px;height:869px;background:#808080"></i>
<i style="left:0px;top:19px;width:1217px;height:1px;background:#7B7B63"></i>
<i style="left:26px;top:3px;width:1px;height:869px;background:#7B7B63"></i>
<i style="left:85px;top:3px;width:1px;height:17px;background:#7B7B63"></i>
<i style="left:123px;top:3px;width:1px;height:17px;background:#7B7B63"></i>
<i style="left:161px;top:3px;width:1px;height:17px;background:#7B7B63"></i>
<i style="left:238px;top:3px;width:1px;height:17px;background:#7B7B63"></i>
<i style="left:295px;top:3px;width:1px;height:17px;background:#7B7B63"></i>
<i style="left:355px;top:3px;width:1px;height:17px;background:#7B7B63"></i>
<i style="left:411px;top:3px;width:1px;height:17px;background:#7B7B63"></i>
<i style="left:457px;top:3px;width:1px;height:17px;background:#7B7B63"></i>
<i style="left:515px;top:3px;width:1px;height:17px;background:#7B7B63"></i>
<i style="left:715px;top:3px;width:1px;height:17px;background:#7B7B63"></i>
<i style="left:827px;top:3px;width:1px;height:17px;background:#7B7B63"></i>
<i style="left:995px;top:3px;width:1px;height:17px;background:#7B7B63"></i>
<i style="left:1059px;top:3px;width:1px;height:17px;background:#7B7B63"></i>
<i style="left:1150px;top:3px;width:1px;height:17px;background:#7B7B63"></i>
<i style="left:1214px;top:3px;width:1px;height:17px;background:#7B7B63"></i>
<i style="left:1px;top:37px;width:26px;height:1px;background:#7B7B63"></i>
<i style="left:1px;top:57px;width:26px;height:1px;background:#7B7B63"></i>
<i style="left:1px;top:78px;width:26px;height:1px;background:#7B7B63"></i>
<i style="left:1px;top:99px;width:26px;height:1px;background:#7B7B63"></i>
<i style="left:1px;top:117px;width:26px;height:1px;background:#7B7B63"></i>
<i style="left:1px;top:137px;width:26px;height:1px;background:#7B7B63"></i>
<i style="left:1px;top:158px;width:26px;height:1px;background:#7B7B63"></i>
<i style="left:1px;top:175px;width:26px;height:1px;background:#7B7B63"></i>
<i style="left:1px;top:193px;width:26px;height:1px;background:#7B7B63"></i>
<i style="left:1px;top:211px;width:26px;height:1px;background:#7B7B63"></i>
<i style="left:1px;top:228px;width:26px;height:1px;background:#7B7B63"></i>
<i style="left:1px;top:245px;width:26px;height:1px;background:#7B7B63"></i>
<i style="left:1px;top:262px;width:26px;height:1px;background:#7B7B63"></i>
<i style="left:1px;top:279px;width:26px;height:1px;background:#7B7B63"></i>
<i style="left:1px;top:296px;width:26px;height:1px;background:#7B7B63"></i>
<i style="left:1px;top:313px;width:26px;height:1px;background:#7B7B63"></i>
<i style="left:1px;top:330px;width:26px;height:1px;background:#7B7B63"></i>
<i style="left:1px;top:347px;width:26px;height:1px;background:#7B7B63"></i>
<i style="left:1px;top:364px;width:26px;height:1px;background:#7B7B63"></i>
<i style="left:1px;top:381px;width:26px;height:1px;background:#7B7B63"></i>
<i style="left:1px;top:398px;width:26px;height:1px;background:#7B7B63"></i>
<i style="left:1px;top:415px;width:26px;height:1px;background:#7B7B63"></i>
<i style="left:1px;top:432px;width:26px;height:1px;background:#7B7B63"></i>
<i style="left:1px;top:449px;width:26px;height:1px;background:#7B7B63"></i>
<i style="left:1px;top:466px;width:26px;height:1px;background:#7B7B63"></i>
<i style="left:1px;top:483px;width:26px;height:1px;background:#7B7B63"></i>
<i style="left:1px;top:500px;width:26px;height:1px;background:#7B7B63"></i>
<i style="left:1px;top:517px;width:26px;height:1px;background:#7B7B63"></i>
<i style="left:1px;top:534px;width:26px;height:1px;background:#7B7B63"></i>
<i style="left:1px;top:551px;width:26px;height:1px;background:#7B7B63"></i>
<i style="left:1px;top:568px;width:26px;height:1px;background:#7B7B63"></i>
<i style="left:1px;top:585px;width:26px;height:1px;background:#7B7B63"></i>
<i style="left:1px;top:602px;width:26px;height:1px;background:#7B7B63"></i>
<i style="left:1px;top:619px;width:26px;height:1px;background:#7B7B63"></i>
<i style="left:1px;top:636px;width:26px;height:1px;background:#7B7B63"></i>
<i style="left:1px;top:653px;width:26px;height:1px;background:#7B7B63"></i>
<i style="left:1px;top:670px;width:26px;height:1px;background:#7B7B63"></i>
<i style="left:1px;top:687px;width:26px;height:1px;background:#7B7B63"></i>
<i style="left:1px;top:704px;width:26px;height:1px;background:#7B7B63"></i>
<i style="left:1px;top:721px;width:26px;height:1px;background:#7B7B63"></i>
<i style="left:1px;top:738px;width:26px;height:1px;background:#7B7B63"></i>
<i style="left:1px;top:755px;width:26px;height:1px;background:#7B7B63"></i>
<i style="left:1px;top:772px;width:26px;height:1px;background:#7B7B63"></i>
<i style="left:1px;top:789px;width:26px;height:1px;background:#7B7B63"></i>
<i style="left:1px;top:806px;width:26px;height:1px;background:#7B7B63"></i>
<i style="left:1px;top:823px;width:26px;height:1px;background:#7B7B63"></i>
<i style="left:1px;top:840px;width:26px;height:1px;background:#7B7B63"></i>
<i style="left:1px;top:857px;width:26px;height:1px;background:#7B7B63"></i>
<i style="left:516px;top:3px;width:199px;height:16px;background:#FFC36F"></i>
<i style="left:516px;top:19px;width:200px;height:1px;background:#000080"></i>
<i style="left:1px;top:176px;width:25px;height:17px;background:#FFC36F"></i>
<i style="left:26px;top:176px;width:1px;height:18px;background:#000080"></i>
<i style="left:1px;top:193px;width:26px;height:1px;background:#000080"></i>
<p class="c" style="top:3px;left:-94.0px;">D</p>
<p class="c" style="top:3px;left:-45.5px;">E</p>
<p class="c" style="top:3px;left:-7.5px;">F</p>
<p class="c" style="top:3px;left:50.0px;">G</p>
<p class="c" style="top:3px;left:117.0px;">H</p>
<p class="c" style="top:3px;left:175.5px;">I</p>
<p class="c" style="top:3px;left:233.5px;">J</p>
<p class="c" style="top:3px;left:284.5px;">K</p>
<p class="c" style="top:3px;left:336.5px;">L</p>
<p class="c" style="top:3px;left:465.5px;">M</p>
<p class="c" style="top:3px;left:621.5px;">N</p>
<p class="c" style="top:3px;left:761.5px;">O</p>
<p class="c" style="top:3px;left:877.5px;">P</p>
<p class="c" style="top:3px;left:955.0px;">Q</p>
<p class="c" style="top:3px;left:1032.5px;">R</p>
<p class="c" style="top:20px;left:-136.5px;">1</p>
<p class="c" style="top:41px;left:-136.5px;">2</p>
<p class="c" style="top:61px;left:-136.5px;">3</p>
<p class="c" style="top:82px;left:-136.5px;">4</p>
<p class="c" style="top:100px;left:-136.5px;">5</p>
<p class="c" style="top:121px;left:-136.5px;">6</p>
<p class="c" style="top:141px;left:-136.5px;">7</p>
<p class="c" style="top:159px;left:-136.5px;">8</p>
<p class="c" style="top:176px;left:-136.5px;">9</p>
<p class="c" style="top:194px;left:-136.5px;">10</p>
<p class="c" style="top:212px;left:-136.5px;">11</p>
<p class="c" style="top:229px;left:-136.5px;">12</p>
<p class="c" style="top:246px;left:-136.5px;">13</p>
<p class="c" style="top:263px;left:-136.5px;">14</p>
<p class="c" style="top:280px;left:-136.5px;">15</p>
<p class="c" style="top:297px;left:-136.5px;">16</p>
<p class="c" style="top:314px;left:-136.5px;">17</p>
<p class="c" style="top:331px;left:-136.5px;">18</p>
<p class="c" style="top:348px;left:-136.5px;">19</p>
<p class="c" style="top:365px;left:-136.5px;">20</p>
<p class="c" style="top:382px;left:-136.5px;">21</p>
<p class="c" style="top:399px;left:-136.5px;">22</p>
<p class="c" style="top:416px;left:-136.5px;">23</p>
<p class="c" style="top:433px;left:-136.5px;">24</p>
<p class="c" style="top:450px;left:-136.5px;">25</p>
<p class="c" style="top:467px;left:-136.5px;">26</p>
<p class="c" style="top:484px;left:-136.5px;">27</p>
<p class="c" style="top:501px;left:-136.5px;">28</p>
<p class="c" style="top:518px;left:-136.5px;">29</p>
<p class="c" style="top:535px;left:-136.5px;">30</p>
<p class="c" style="top:552px;left:-136.5px;">31</p>
<p class="c" style="top:569px;left:-136.5px;">32</p>
<p class="c" style="top:586px;left:-136.5px;">33</p>
<p class="c" style="top:603px;left:-136.5px;">34</p>
<p class="c" style="top:620px;left:-136.5px;">35</p>
<p class="c" style="top:637px;left:-136.5px;">36</p>
<p class="c" style="top:654px;left:-136.5px;">37</p>
<p class="c" style="top:671px;left:-136.5px;">38</p>
<p class="c" style="top:688px;left:-136.5px;">39</p>
<p class="c" style="top:705px;left:-136.5px;">40</p>
<p class="c" style="top:722px;left:-136.5px;">41</p>
<p class="c" style="top:739px;left:-136.5px;">42</p>
<p class="c" style="top:756px;left:-136.5px;">43</p>
<p class="c" style="top:773px;left:-136.5px;">44</p>
<p class="c" style="top:790px;left:-136.5px;">45</p>
<p class="c" style="top:807px;left:-136.5px;">46</p>
<p class="c" style="top:824px;left:-136.5px;">47</p>
<p class="c" style="top:841px;left:-136.5px;">48</p>
<p class="c" style="top:858px;left:-136.5px;">49</p>
<i style="left:514px;top:174px;width:200px;height:1px;background:#000"></i>
<i style="left:514px;top:175px;width:200px;height:1px;background:#404040"></i>
<i style="left:514px;top:176px;width:200px;height:1px;background:#000"></i>
<i style="left:514px;top:192px;width:198px;height:1px;background:#000"></i>
<i style="left:514px;top:193px;width:198px;height:1px;background:#404040"></i>
<i style="left:514px;top:194px;width:198px;height:1px;background:#000"></i>
<i style="left:514px;top:174px;width:2px;height:21px;background:#000066"></i>
<i style="left:516px;top:174px;width:1px;height:21px;background:#000"></i>
<i style="left:714px;top:174px;width:2px;height:16px;background:#fff"></i>
<i style="left:716px;top:174px;width:1px;height:16px;background:#000066"></i>
<i style="left:712px;top:190px;width:6px;height:6px;background:#fff"></i>
<i style="left:715px;top:192px;width:3px;height:4px;background:#000066"></i>
<i style="left:713px;top:190px;width:3px;height:1px;background:#000"></i>
<i style="left:712px;top:191px;width:1px;height:4px;background:#000"></i>
<i style="left:0px;top:866px;width:1217px;height:3px;background:#F1EFE2"></i>
<i style="left:0px;top:866px;width:699px;height:1px;background:#808080"></i>
<i style="left:64px;top:866px;width:1px;height:3px;background:#6b6b63"></i>
<i style="left:65px;top:867px;width:1px;height:2px;background:#fff"></i>
<i style="left:120px;top:866px;width:1px;height:3px;background:#6b6b63"></i>
<i style="left:121px;top:867px;width:1px;height:2px;background:#fff"></i>
<i style="left:175px;top:866px;width:1px;height:3px;background:#6b6b63"></i>
<i style="left:176px;top:867px;width:1px;height:2px;background:#fff"></i>
<i style="left:225px;top:866px;width:1px;height:3px;background:#6b6b63"></i>
<i style="left:226px;top:867px;width:1px;height:2px;background:#fff"></i>
<i style="left:327px;top:866px;width:1px;height:3px;background:#6b6b63"></i>
<i style="left:328px;top:867px;width:1px;height:2px;background:#fff"></i>
<i style="left:464px;top:866px;width:1px;height:3px;background:#6b6b63"></i>
<i style="left:465px;top:867px;width:1px;height:2px;background:#fff"></i>
<i style="left:584px;top:866px;width:1px;height:3px;background:#6b6b63"></i>
<i style="left:585px;top:867px;width:1px;height:2px;background:#fff"></i>
<i style="left:699px;top:866px;width:518px;height:1px;background:#8a887c"></i>
<i style="left:699px;top:866px;width:1px;height:3px;background:#8a887c"></i>
<i style="left:700px;top:867px;width:517px;height:2px;background:#fbfaf6"></i>
<i style="left:792px;top:866px;width:2px;height:3px;background:#8a887c"></i>
</div></body></html>
